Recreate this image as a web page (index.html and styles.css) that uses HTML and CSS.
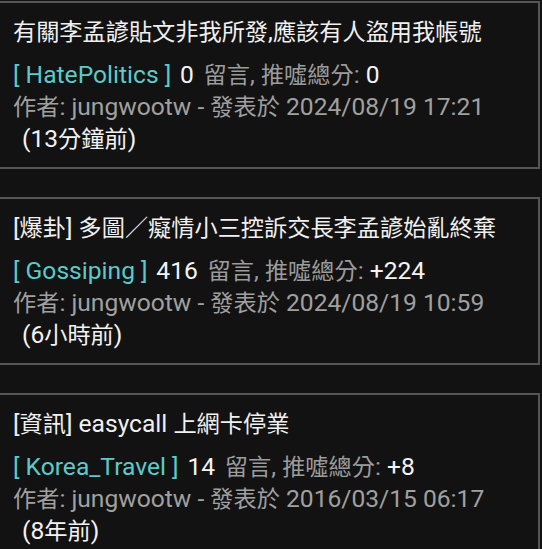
FILE: index.html
```html
<!DOCTYPE html>
<html lang="zh-Hant">
<head>
<meta charset="utf-8">
<link rel="stylesheet" href="styles.css">
</head>
<body>
<div class="list">
  <div class="card">
    <div class="title">有關李孟諺貼文非我所發<span class="l">,</span>應該有人盜用我帳號</div>
    <div class="stats"><span class="board l">[ HatePolitics ]</span> <span class="l w count">0</span> 留言<span class="l">, </span>推噓總分<span class="l">: </span><span class="l w">0</span></div>
    <div class="meta">作者<span class="l">: jungwootw - </span>發表於<span class="l"> 2024/08/19 17:21</span></div>
    <div class="ago"><span class="l">(13</span>分鐘前<span class="l">)</span></div>
  </div>
  <div class="card">
    <div class="title"><span class="l">[</span>爆卦<span class="l">] </span>多圖／癡情小三控訴交長李孟諺始亂終棄</div>
    <div class="stats"><span class="board l">[ Gossiping ]</span> <span class="l w count">416</span> 留言<span class="l">, </span>推噓總分<span class="l">: </span><span class="l w">+224</span></div>
    <div class="meta">作者<span class="l">: jungwootw - </span>發表於<span class="l"> 2024/08/19 10:59</span></div>
    <div class="ago"><span class="l">(6</span>小時前<span class="l">)</span></div>
  </div>
  <div class="card">
    <div class="title"><span class="l">[</span>資訊<span class="l">] easycall </span>上網卡停業</div>
    <div class="stats"><span class="board l">[ Korea_Travel ]</span> <span class="l w count">14</span> 留言<span class="l">, </span>推噓總分<span class="l">: </span><span class="l w">+8</span></div>
    <div class="meta">作者<span class="l">: jungwootw - </span>發表於<span class="l"> 2016/03/15 06:17</span></div>
    <div class="ago"><span class="l">(8</span>年前<span class="l">)</span></div>
  </div>
</div>
</body>
</html>
```
FILE: styles.css
```css
html, body {
  margin: 0;
  padding: 0;
  background: #121212;
}
body {
  font-family: Roboto, "Noto Sans CJK TC", sans-serif;
  font-size: 23.2px;
  color: #f2f2f2;
  overflow: hidden;
}
.list {
  display: flex;
  flex-direction: column;
  gap: 28px;
  padding-top: 1px;
}
.card {
  width: 540px;
  box-sizing: border-box;
  border: 2px solid #555;
  border-left: none;
  background: #121212;
  padding: 14px 0 12px 13px;
}
.l {
  font-size: 24.6px;
}
.title {
  line-height: 30px;
  height: 30px;
  margin-bottom: 12px;
  color: #f0f0f0;
  white-space: nowrap;
}
.stats, .meta, .ago {
  line-height: 32px;
  height: 32px;
  white-space: nowrap;
}
.stats {
  color: #9c9c9c;
}
.board {
  color: #5ccaca;
}
.w {
  color: #f4f4f4;
}
.count {
  margin: 0 4px 0 3px;
}
.meta {
  color: #a0a0a0;
}
.ago {
  color: #f2f2f2;
  padding-left: 9px;
}
```
